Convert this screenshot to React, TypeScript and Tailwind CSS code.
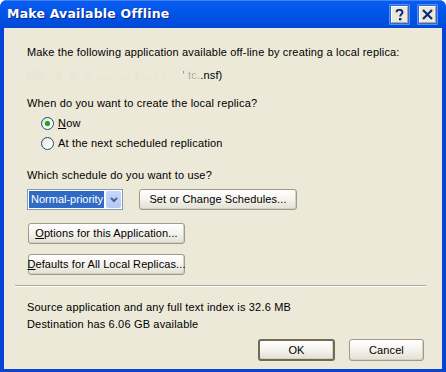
import type { ReactNode } from "react";

const font = { fontFamily: '"Liberation Sans", Arial, sans-serif', letterSpacing: "0.17px" };

function XpButton({
  children,
  className,
  isDefault,
}: {
  children: ReactNode;
  className: string;
  isDefault?: boolean;
}) {
  return (
    <button
      className={
        "flex items-center justify-center whitespace-nowrap rounded-[3px] text-[11px] text-black tracking-[0.1px] bg-gradient-to-b from-[#ffffff] via-[#f4f3ee] to-[#e3e0d2] shadow-[inset_-1px_-1px_0_#d6d0c0] " +
        (isDefault ? "border-[2px] border-[#6f6c52] " : "border border-[#9c9a8c] ") +
        className
      }
    >
      <span>{children}</span>
    </button>
  );
}

function Radio({ checked, children }: { checked?: boolean; children: ReactNode }) {
  return (
    <div className="flex items-center h-[13px] ml-[37px]">
      <span className="w-[13px] h-[13px] rounded-full border border-[#1c5180] bg-gradient-to-br from-[#dcdcd6] via-[#f6f6f4] to-[#ffffff] flex items-center justify-center">
        {checked && (
          <span className="w-[5px] h-[5px] rounded-full bg-[#21a121] shadow-[0_0_1px_#5fcc5f]" />
        )}
      </span>
      <span className="ml-[4px] text-[11px] leading-[13px]">{children}</span>
    </div>
  );
}

export default function App() {
  return (
    <div
      className="w-[446px] h-[372px] flex flex-col rounded-t-[7px] overflow-hidden bg-[#0842d6]"
      style={font}
    >
      {/* title bar */}
      <div className="h-[28px] flex items-center bg-gradient-to-b from-[#0a5cf0] via-[#0055e6] to-[#0049d6] border-t border-[#3d86f8] relative">
        <span
          className="ml-[7px] text-white font-bold [text-shadow:1px_1px_0_#0a1e8a]"
          style={{ fontFamily: '"DejaVu Sans", Verdana, sans-serif', fontSize: "12.5px", letterSpacing: "0.2px" }}
        >
          Make Available Offline
        </span>
        <div className="ml-auto mr-[8px] flex gap-[7px] items-center">
          <div className="p-[1px] border border-[#5a8ff0] rounded-[1px] bg-[#2a67e6]">
            <div className="w-[17px] h-[17px] bg-[#ece9d8] border-t border-l border-white border-r border-b border-r-[#aca899] border-b-[#aca899] flex items-center justify-center">
              <svg width="9" height="12" viewBox="0 0 9 12">
                <path
                  d="M1.5 3.2 C1.5 1.2 3 0.8 4.5 0.8 C6.3 0.8 7.5 1.8 7.5 3.3 C7.5 5 5.2 5.3 5.2 7.5"
                  stroke="#0b2a7a"
                  strokeWidth="2"
                  fill="none"
                />
                <rect x="4" y="9" width="2.4" height="2.4" fill="#0b2a7a" />
              </svg>
            </div>
          </div>
          <div className="p-[1px] border border-[#5a8ff0] rounded-[1px] bg-[#2a67e6]">
            <div className="w-[17px] h-[17px] bg-[#ece9d8] border-t border-l border-white border-r border-b border-r-[#aca899] border-b-[#aca899] flex items-center justify-center">
              <svg width="11" height="11" viewBox="0 0 11 11">
                <path d="M1 1 L10 10 M10 1 L1 10" stroke="#0b2a7a" strokeWidth="2.2" />
              </svg>
            </div>
          </div>
        </div>
      </div>

      {/* client area */}
      <div className="flex-1 mx-[4px] mb-[3px] bg-[#ece9d8] flex flex-col text-[11px] text-black">
        <p className="mt-[18px] ml-[23px] h-[13px] leading-[13px]">
          Make the following application available off-line by creating a local replica:
        </p>
        <p className="mt-[10px] ml-[23px] h-[13px] leading-[13px] whitespace-pre">
          <span className="text-[#e2e0d6] blur-[1px]">{"(Se    r   c   r  .....  ,..  i ... j  / ..."}</span>
          <span className="text-[#8a8a86] blur-[0.5px]">{" ' "}</span>
          <span className="text-[#b0aea6] blur-[0.6px]">{"tc."}</span>
          <span>.nsf)</span>
        </p>
        <p className="mt-[15px] ml-[23px] h-[13px] leading-[13px]">
          When do you want to create the local replica?
        </p>
        <div className="mt-[7px]">
          <Radio checked>
            <span className="underline">N</span>ow
          </Radio>
        </div>
        <div className="mt-[7px]">
          <Radio>At the next scheduled replication</Radio>
        </div>
        <p className="mt-[19px] ml-[23px] h-[13px] leading-[13px]">
          Which schedule do you want to use?
        </p>

        <div className="mt-[7px] ml-[23px] flex items-center">
          <div className="w-[96px] h-[21px] border border-[#7f9db9] bg-white flex items-center p-[1px]">
            <div className="flex-1 h-full bg-[#316ac5] text-white flex items-center pl-[2px] mr-[2px] tracking-normal">
              Normal-priority
            </div>
            <div className="w-[15px] h-full bg-gradient-to-b from-[#c6d6fb] to-[#b4c8f6] rounded-[2px] flex items-center justify-center">
              <svg width="8" height="6" viewBox="0 0 8 6">
                <path d="M1 1 L4 4 L7 1" stroke="#4d6185" strokeWidth="2" fill="none" />
              </svg>
            </div>
          </div>
          <XpButton className="ml-[16px] w-[158px] h-[21px]">Set or Change Schedules...</XpButton>
        </div>

        <XpButton className="mt-[13px] ml-[24px] w-[157px] h-[21px]">
          <span className="underline">O</span>ptions for this Application...
        </XpButton>
        <XpButton className="mt-[10px] ml-[24px] w-[157px] h-[21px]">
          <span className="underline">D</span>efaults for All Local Replicas...
        </XpButton>

        <div className="mt-[10px] mx-[11px] mr-[16px] border-t border-[#aca899] border-b border-b-white" />

        <p className="mt-[14px] ml-[23px] h-[13px] leading-[13px]">
          Source application and any full text index is 32.6 MB
        </p>
        <p className="mt-[4px] ml-[23px] h-[13px] leading-[13px]">
          Destination has 6.06 GB available
        </p>

        <div className="mt-[8px] flex justify-end mr-[18px] gap-[14px]">
          <XpButton isDefault className="w-[77px] h-[22px]">
            OK
          </XpButton>
          <XpButton className="w-[75px] h-[22px]">Cancel</XpButton>
        </div>
      </div>
    </div>
  );
}
